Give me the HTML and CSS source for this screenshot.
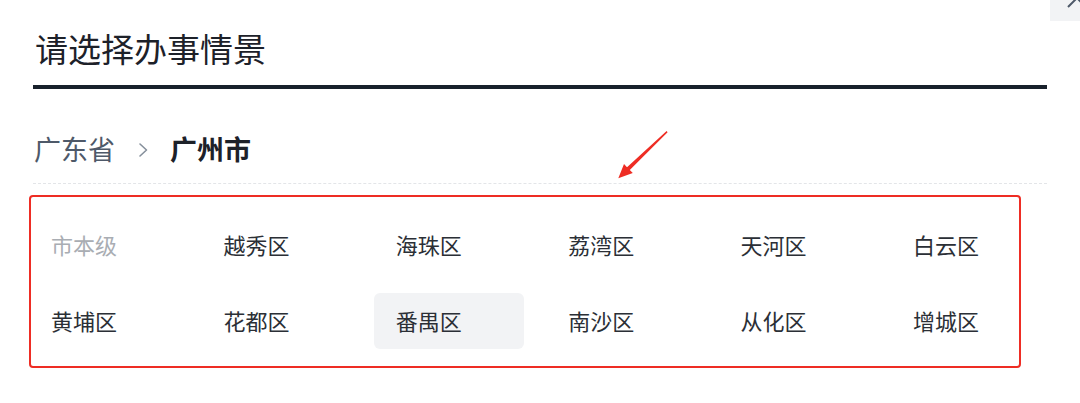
FILE: index.html
```html
<!DOCTYPE html>
<html lang="zh-CN">
<head>
<meta charset="utf-8">
<title>请选择办事情景</title>
<link rel="stylesheet" href="styles.css">
</head>
<body>
<div class="page">
  <h1 class="title">请选择办事情景</h1>
  <div class="crumbs">
    <span class="crumb">广东省</span>
    <svg class="chev" width="12" height="16" viewBox="0 0 12 16"><polyline points="3,2 9.5,8 3,14" fill="none" stroke="#86909c" stroke-width="1.6" stroke-linecap="round" stroke-linejoin="round"/></svg>
    <span class="crumb current">广州市</span>
  </div>
  <div class="grid">
    <div class="cell disabled">市本级</div>
    <div class="cell">越秀区</div>
    <div class="cell">海珠区</div>
    <div class="cell">荔湾区</div>
    <div class="cell">天河区</div>
    <div class="cell">白云区</div>
    <div class="cell">黄埔区</div>
    <div class="cell">花都区</div>
    <div class="cell active">番禺区</div>
    <div class="cell">南沙区</div>
    <div class="cell">从化区</div>
    <div class="cell">增城区</div>
  </div>

  <div class="close">
    <svg width="30" height="52" viewBox="0 0 30 52"><path d="M18 20 L36 38 M36 20 L18 38" stroke="#4e5969" stroke-width="2" fill="none"/></svg>
  </div>
  <div class="mark-box"></div>
  <svg class="mark-arrow" width="80" height="70" viewBox="0 0 80 70"><polygon points="67.6,12.3 29.8,50.0 32.8,53.1 18.3,58.3 24.0,44.1 27.0,47.2 66.6,11.1" fill="#ee2d24"/></svg>
</div>
</body>
</html>
```
FILE: styles.css
```css
html {
  overflow: hidden;
}
html, body {
  margin: 0;
  padding: 0;
  background: #ffffff;
}
body {
  font-family: "Noto Sans CJK SC", "Noto Sans", sans-serif;
  color: #1d2129;
}
.page {
  position: relative;
  min-height: 403px;
  box-sizing: border-box;
  padding: 32px 33px 0 33px;
}
.title {
  margin: 0;
  font-size: 33px;
  line-height: 33px;
  font-weight: 400;
  color: #1d2129;
  padding: 0 0 20px 2px;
  border-bottom: 4px solid #18212b;
}
.crumbs {
  display: flex;
  align-items: center;
  margin-top: 46px;
  padding-bottom: 21px;
  border-bottom: 1px dashed #e3e5e8;
  height: 27px;
}
.crumb {
  font-size: 27px;
  line-height: 27px;
  color: #4e5969;
  padding-left: 1px;
}
.crumb.current {
  font-weight: 700;
  color: #1d2129;
}
.chev {
  margin: 2px 20px 0 22px;
}
.grid {
  display: grid;
  grid-template-columns: repeat(6, 150px);
  column-gap: 22.4px;
  row-gap: 20px;
  margin: 33px 0 0 -4px;
}
.cell {
  height: 56px;
  box-sizing: border-box;
  display: flex;
  align-items: center;
  padding: 0 22px 2px 22px;
  font-size: 22px;
  line-height: 22px;
  color: #2b2f36;
  border-radius: 6px;
}
.cell.disabled {
  color: #a9adb3;
}
.cell.active {
  background: #f2f3f5;
}
.close {
  position: absolute;
  left: 1050px;
  top: -31px;
  width: 30px;
  height: 52px;
  background: #f2f3f5;
}
.close svg {
  display: block;
}
.mark-box {
  position: absolute;
  left: 29px;
  top: 195px;
  width: 992px;
  height: 173px;
  box-sizing: border-box;
  border: 2px solid #ee2d24;
  border-radius: 4px;
}
.mark-arrow {
  position: absolute;
  left: 600px;
  top: 120px;
}
```
